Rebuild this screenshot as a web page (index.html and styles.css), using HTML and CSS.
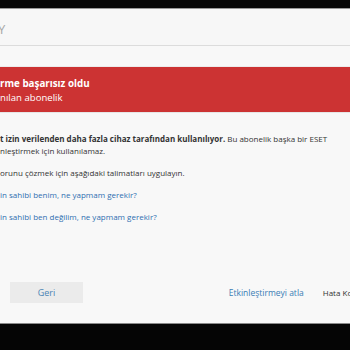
FILE: index.html
```html
<!DOCTYPE html>
<html>
<head>
<meta charset="utf-8">
<link rel="stylesheet" href="styles.css">
</head>
<body>
<div class="screen">
  <div class="topbar"></div>
  <div class="header"><span class="brand">Y</span></div>
  <div class="gap"></div>
  <div class="banner">
    <div class="banner-title">rme başarısız oldu</div>
    <div class="banner-sub">nılan abonelik</div>
  </div>
  <div class="content">
    <p class="para"><b>t izin verilenden daha fazla cihaz tarafından kullanılıyor.</b> Bu abonelik başka bir ESET<br>nleştirmek için kullanılamaz.</p>
    <p class="para">orunu çözmek için aşağıdaki talimatları uygulayın.</p>
    <p class="link">in sahibi benim, ne yapmam gerekir?</p>
    <p class="link">in sahibi ben değilim, ne yapmam gerekir?</p>
  </div>
  <div class="footer">
    <div class="btn">Geri</div>
    <div class="skip">Etkinleştirmeyi atla</div>
    <div class="code">Hata Kodu</div>
  </div>
  <div class="bottombar"></div>
</div>
</body>
</html>
```
FILE: styles.css
```css
html, body { margin: 0; padding: 0; }
body { width: 350px; height: 350px; overflow: hidden; background: #000; font-family: "Open Sans", "Noto Sans", sans-serif; }
.screen { width: 350px; height: 350px; display: flex; flex-direction: column; background: #f8f8f8; }
.topbar { height: 8px; background: #080808; border-bottom: 1px solid #9a9a9a; flex: none; }
.header { height: 37px; flex: none; display: flex; align-items: center; padding-top: 4px; box-sizing: border-box; border-bottom: 1px solid #dcdcdc; background: #f7f7f7; }
.brand { font-size: 13px; color: #a8a8a8; margin-left: -2px; }
.gap { height: 20px; flex: none; border-bottom: 1px solid #ececec; }
.banner { height: 46px; flex: none; box-sizing: border-box; padding-top: 2px; background: #cc3333; color: #fff; display: flex; flex-direction: column; justify-content: center; border-bottom: 1px solid #e6e6e6; }
.banner-title { font-size: 9.8px; font-weight: 700; line-height: 14px; }
.banner-sub { font-size: 9.6px; line-height: 14px; }
.content { padding-top: 20px; font-size: 8px; color: #333; flex: none; height: 169px; box-sizing: border-box; }
.para { margin: 0 0 10px; line-height: 12px; }
.link { margin: 0 0 10px; line-height: 12px; color: #2f6fb0; }
.footer { flex: none; height: 41px; display: flex; align-items: flex-start; }
.btn { width: 73px; height: 21px; margin-left: 10px; background: #ebebeb; color: #4a84b4; display: flex; align-items: center; justify-content: center; font-size: 9px; }
.skip { margin-left: auto; color: #3a7db5; font-size: 8.5px; line-height: 21px; }
.code { margin-left: 19px; margin-right: -12px; color: #333; font-size: 8px; line-height: 21px; white-space: nowrap; }
.bottombar { flex: 1; background: #050505; border-top: 1px solid #8a8a8a; }
```
